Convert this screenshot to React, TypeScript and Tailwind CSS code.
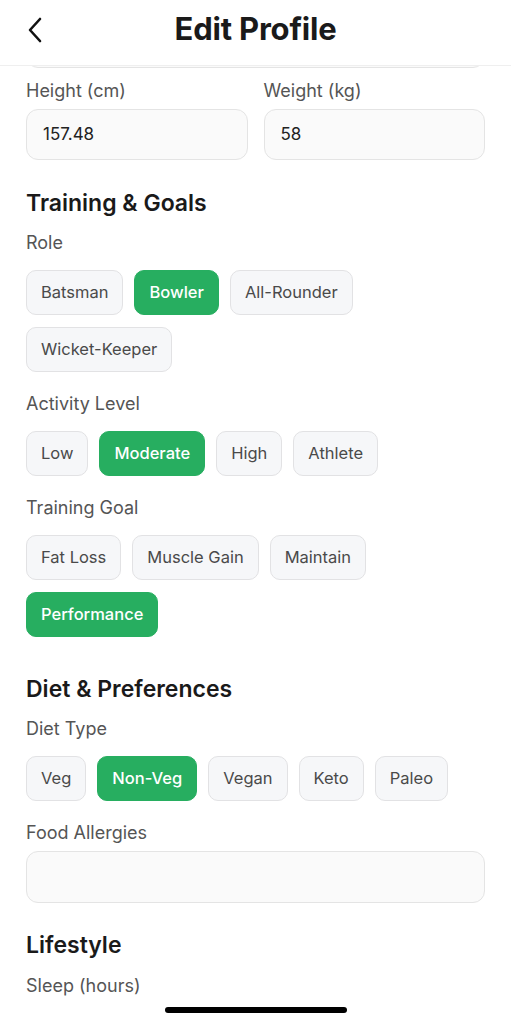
const font = { fontFamily: "Inter, 'Noto Sans', sans-serif" };

function Chip({ label, active = false }: { label: string; active?: boolean }) {
  return (
    <div
      className={
        active
          ? "h-[45px] px-[14px] flex items-center rounded-[10px] bg-[#27ae60] border border-[#27ae60] text-white text-[16.5px] font-medium"
          : "h-[45px] px-[14px] flex items-center rounded-[10px] bg-[#f6f7f9] border border-[#e2e2e4] text-[#4a4a4a] text-[16.5px]"
      }
    >
      {label}
    </div>
  );
}

function Label({ children, className = "" }: { children: string; className?: string }) {
  return <div className={"text-[18px] leading-[22px] text-[#555] " + className}>{children}</div>;
}

function ChipGroup({ title, items, selected, className = "" }: { title: string; items: string[]; selected: string; className?: string }) {
  return (
    <div className={className}>
      <Label>{title}</Label>
      <div className="mt-[16px] flex flex-wrap gap-x-[11px] gap-y-[12px]">
        {items.map((item) => (
          <Chip key={item} label={item} active={item === selected} />
        ))}
      </div>
    </div>
  );
}

function Heading({ children, className = "" }: { children: string; className?: string }) {
  return <h2 className={"text-[23px] leading-[28px] font-semibold text-[#1a1a1a] " + className}>{children}</h2>;
}

export default function App() {
  return (
    <div className="relative h-screen w-full overflow-hidden bg-white" style={font}>
      {/* Header */}
      <header className="relative z-10 h-[66px] bg-white border-b border-[#efefef] flex items-center justify-center">
        <button className="absolute left-[22px] top-[17px] w-[26px] h-[26px] flex items-center justify-center">
          <svg width="18" height="26" viewBox="0 0 18 26" fill="none">
            <polyline points="14,2 4,13 14,24" stroke="#111" strokeWidth="2.6" strokeLinecap="round" strokeLinejoin="round" />
          </svg>
        </button>
        <h1 className="text-[31px] font-bold text-[#1a1a1a] tracking-[-0.2px] -mt-[6px]">Edit Profile</h1>
      </header>

      <main className="px-[26px] overflow-hidden">
        {/* scrolled-off field */}
        <div className="-mt-[49px] h-[51px] rounded-[12px] bg-[#fafafa] border border-[#e4e4e4]" />

        <div className="mt-[12px] grid grid-cols-2 gap-[16px]">
          <div>
            <Label>Height (cm)</Label>
            <div className="mt-[7px] h-[51px] rounded-[12px] bg-[#fafafa] border border-[#e4e4e4] px-[16px] flex items-center text-[17px] text-[#222]">
              157.48
            </div>
          </div>
          <div>
            <Label>Weight (kg)</Label>
            <div className="mt-[7px] h-[51px] rounded-[12px] bg-[#fafafa] border border-[#e4e4e4] px-[16px] flex items-center text-[17px] text-[#222]">
              58
            </div>
          </div>
        </div>

        <Heading className="mt-[29px]">Training &amp; Goals</Heading>
        <ChipGroup className="mt-[15px]" title="Role" items={["Batsman", "Bowler", "All-Rounder", "Wicket-Keeper"]} selected="Bowler" />
        <ChipGroup className="mt-[21px]" title="Activity Level" items={["Low", "Moderate", "High", "Athlete"]} selected="Moderate" />
        <ChipGroup className="mt-[21px]" title="Training Goal" items={["Fat Loss", "Muscle Gain", "Maintain", "Performance"]} selected="Performance" />

        <Heading className="mt-[38px]">Diet &amp; Preferences</Heading>
        <ChipGroup className="mt-[15px]" title="Diet Type" items={["Veg", "Non-Veg", "Vegan", "Keto", "Paleo"]} selected="Non-Veg" />

        <div className="mt-[21px]">
          <Label>Food Allergies</Label>
          <div className="mt-[7px] h-[52px] rounded-[12px] bg-[#fafafa] border border-[#e4e4e4]" />
        </div>

        <Heading className="mt-[28px]">Lifestyle</Heading>
        <Label className="mt-[16px]">Sleep (hours)</Label>
      </main>

      {/* Home indicator */}
      <div className="absolute left-1/2 -translate-x-1/2 bottom-[11px] w-[182px] h-[6px] rounded-full bg-black" />
    </div>
  );
}
